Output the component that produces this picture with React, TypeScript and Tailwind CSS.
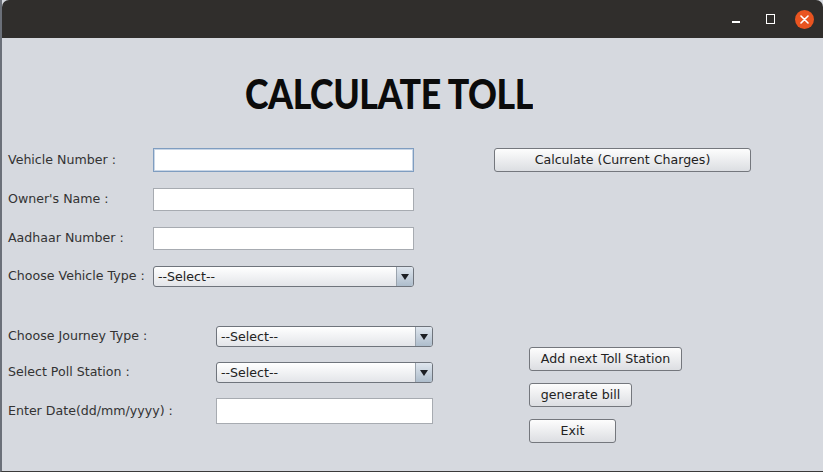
import React from "react";

const font = { fontFamily: '"DejaVu Sans", sans-serif' };

const TextField: React.FC<{ width: string; height: string; focused?: boolean }> = ({
  width,
  height,
  focused,
}) => (
  <div
    className={`${width} ${height} bg-white border ${
      focused ? "border-[#7f9dc0] shadow-[inset_0_0_0_1px_#c9d6e6]" : "border-[#a7abb1]"
    }`}
  />
);

const ComboBox: React.FC<{ width: string }> = ({ width }) => (
  <div
    className={`${width} h-[21px] flex rounded-[3px] border border-[#6f747c] overflow-hidden bg-gradient-to-b from-white to-[#e3e5e9]`}
  >
    <span className="flex-1 pl-[4px] text-[12.6px] leading-[19px] text-[#222]">--Select--</span>
    <span className="w-[17px] flex items-center justify-center border-l border-[#9aa3ad] bg-gradient-to-b from-[#dfe6ee] to-[#aebdcc]">
      <svg width="8" height="6" viewBox="0 0 8 6">
        <path d="M0 0 H8 L4 6 Z" fill="#1c1f24" />
      </svg>
    </span>
  </div>
);

const Button: React.FC<{ width: string; label: string }> = ({ width, label }) => (
  <button
    className={`${width} h-[24px] rounded-[3px] border border-[#74777d] bg-gradient-to-b from-[#fdfdfd] to-[#dcdee2] text-[12.6px] text-[#222] flex items-center justify-center`}
  >
    {label}
  </button>
);

const Label: React.FC<{ text: string; width: string }> = ({ text, width }) => (
  <span className={`${width} text-[12.6px] text-[#333] shrink-0`}>{text}</span>
);

export default function App() {
  return (
    <div
      className="w-[823px] h-[472px] bg-[#d6d9df] overflow-hidden flex flex-col border-l-2 border-[#6b7079] border-b border-b-[#3a3a3a]"
      style={font}
    >
      {/* title bar */}
      <div className="h-[38px] shrink-0 bg-[#302e2c] rounded-t-[7px] flex items-center justify-end pr-[9px]">
        <span className="w-[8px] h-[2px] bg-white mr-[26px] mt-[5px]" />
        <span className="w-[9px] h-[10px] border-[1.5px] border-white mr-[20px]" />
        <span className="w-[19px] h-[19px] rounded-full bg-[#e95420] flex items-center justify-center">
          <svg width="9" height="9" viewBox="0 0 9 9">
            <path d="M1 1 L8 8 M8 1 L1 8" stroke="white" strokeWidth="1.6" strokeLinecap="round" />
          </svg>
        </span>
      </div>

      {/* heading */}
      <div className="pl-[243px] pt-[35px] h-[110px] shrink-0">
        <h1
          className="text-[41px] leading-[42px] font-black text-[#0b0b0b] tracking-[-0.5px] scale-x-[0.87] origin-left whitespace-nowrap"
          style={{ fontFamily: '"Lato", sans-serif' }}
        >
          CALCULATE TOLL
        </h1>
      </div>

      <div className="flex pl-[6px]">
        {/* left form */}
        <div className="flex flex-col w-[486px]">
          <div className="flex items-center">
            <Label text="Vehicle Number :" width="w-[145px]" />
            <TextField width="w-[261px]" height="h-[24px]" focused />
          </div>
          <div className="flex items-center mt-[16px]">
            <Label text="Owner's Name :" width="w-[145px]" />
            <TextField width="w-[261px]" height="h-[23px]" />
          </div>
          <div className="flex items-center mt-[16px]">
            <Label text="Aadhaar Number :" width="w-[145px]" />
            <TextField width="w-[261px]" height="h-[23px]" />
          </div>
          <div className="flex items-center mt-[16px]">
            <Label text="Choose Vehicle Type :" width="w-[145px]" />
            <ComboBox width="w-[261px]" />
          </div>
          <div className="flex items-center mt-[39px]">
            <Label text="Choose Journey Type :" width="w-[208px]" />
            <ComboBox width="w-[217px]" />
          </div>
          <div className="flex items-center mt-[15px]">
            <Label text="Select Poll Station :" width="w-[208px]" />
            <ComboBox width="w-[217px]" />
          </div>
          <div className="flex items-center mt-[15px]">
            <Label text="Enter Date(dd/mm/yyyy) :" width="w-[208px]" />
            <TextField width="w-[217px]" height="h-[26px]" />
          </div>
        </div>

        {/* right column */}
        <div className="flex flex-col">
          <Button width="w-[257px]" label="Calculate (Current Charges)" />
          <div className="flex flex-col pl-[35px] mt-[175px] gap-[12px]">
            <Button width="w-[153px]" label="Add next Toll Station" />
            <Button width="w-[103px]" label="generate bill" />
            <Button width="w-[87px]" label="Exit" />
          </div>
        </div>
      </div>
    </div>
  );
}
